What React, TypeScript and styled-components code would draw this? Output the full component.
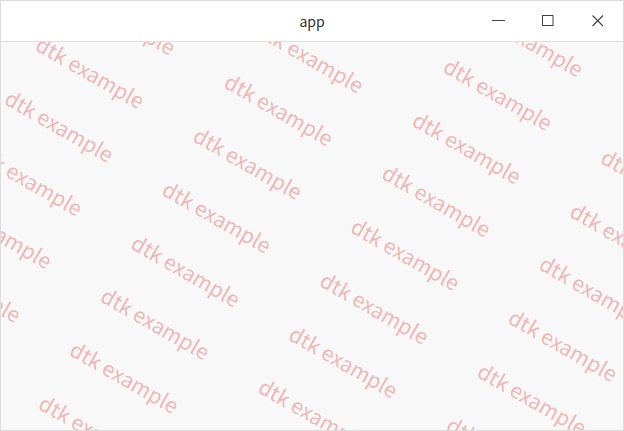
import React from "react";
import styled, { createGlobalStyle } from "styled-components";

const GlobalStyle = createGlobalStyle`
  html, body { margin: 0; padding: 0; background: #ffffff; }
  body { font-family: "Noto Sans CJK SC", "Noto Sans", sans-serif; }
  * { box-sizing: border-box; }
`;

const COL = 182;
const ROW = 61.7;
const COLS = 6;
const ROWS = 13;

const Window = styled.div`
  width: 624px;
  height: 431px;
  display: flex;
  flex-direction: column;
  border: 1px solid #dcdcdc;
  background: #ffffff;
`;

const TitleBar = styled.div`
  height: 41px;
  flex: none;
  display: grid;
  grid-template-columns: 1fr auto 1fr;
  align-items: center;
  background: #ffffff;
  border-bottom: 1px solid #e0e0e0;
`;

const Title = styled.div`
  grid-column: 2;
  font-size: 14px;
  color: #303030;
  line-height: 20px;
  padding-bottom: 1px;
`;

const Controls = styled.div`
  grid-column: 3;
  justify-self: end;
  display: flex;
  height: 40px;
`;

const ControlButton = styled.button`
  width: 50px;
  height: 40px;
  border: none;
  padding: 0;
  background: transparent;
  display: flex;
  align-items: center;
  justify-content: center;
  color: #404040;
`;

const Content = styled.div`
  flex: 1;
  position: relative;
  overflow: hidden;
  background: #f8f8f8;
`;

const WatermarkLayer = styled.div<{ $x: number; $y: number }>`
  position: absolute;
  left: ${(p) => p.$x}px;
  top: ${(p) => p.$y}px;
  transform-origin: 0 0;
  transform: rotate(30deg) translate(${-2 * COL}px, ${-6 * ROW}px);
  display: grid;
  grid-template-columns: repeat(${COLS}, ${COL}px);
  grid-auto-rows: ${ROW}px;
  pointer-events: none;
`;

const Mark = styled.span`
  font-family: "Noto Sans CJK SC", "Noto Sans", sans-serif;
  font-size: 21px;
  line-height: 21px;
  white-space: nowrap;
  color: rgba(230, 50, 50, 0.35);
`;

const MinIcon = () => (
  <svg width="14" height="14" viewBox="0 0 14 14">
    <line x1="1" y1="6.5" x2="14" y2="6.5" stroke="currentColor" strokeWidth="1" />
  </svg>
);

const MaxIcon = () => (
  <svg width="12" height="12" viewBox="0 0 12 12">
    <rect x="0.5" y="0.5" width="10.5" height="10" fill="none" stroke="currentColor" strokeWidth="1" />
  </svg>
);

const CloseIcon = () => (
  <svg width="12" height="12" viewBox="0 0 12 12">
    <path d="M0.5 0.5 L11 11 M11 0.5 L0.5 11" stroke="currentColor" strokeWidth="1.1" fill="none" />
  </svg>
);

export default function App() {
  const marks = Array.from({ length: COLS * ROWS }, (_, i) => i);
  return (
    <>
      <GlobalStyle />
      <Window>
        <TitleBar>
          <Title>app</Title>
          <Controls>
            <ControlButton aria-label="minimize"><MinIcon /></ControlButton>
            <ControlButton aria-label="maximize"><MaxIcon /></ControlButton>
            <ControlButton aria-label="close"><CloseIcon /></ControlButton>
          </Controls>
        </TitleBar>
        <Content>
          <WatermarkLayer $x={200} $y={81.8}>
            {marks.map((i) => (
              <Mark key={i}>dtk example</Mark>
            ))}
          </WatermarkLayer>
        </Content>
      </Window>
    </>
  );
}
